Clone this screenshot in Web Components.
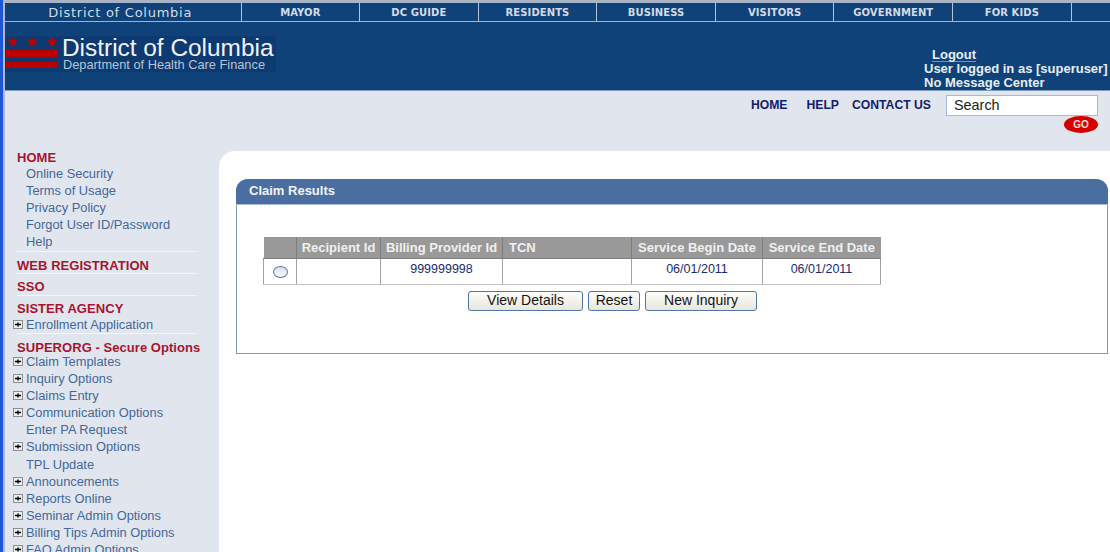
<!DOCTYPE html>
<html>
<head>
<meta charset="utf-8">
<title>Claim Results</title>
<style>
html, body { margin: 0; height: 552px; overflow: hidden; background: #e1e6ee; }
body { font-family: "Liberation Sans", Arial, sans-serif; }
</style>
</head>
<body>
<dc-page>
  <dc-topnav slot="top"></dc-topnav>
  <dc-banner slot="top"></dc-banner>
  <dc-utility slot="top"></dc-utility>
  <dc-sidebar slot="side"></dc-sidebar>
  <claim-results slot="main"></claim-results>
</dc-page>

<script>
class DcPage extends HTMLElement {
  constructor() {
    super();
    this.attachShadow({ mode: "open" });
    this.shadowRoot.innerHTML = `
      <style>
        :host { display: block; height: 552px; overflow: hidden; border-left: 3px solid #1c57d8; box-sizing: border-box; }
        .inner { border-left: 2px solid #b4b8bf; height: 552px; box-sizing: border-box; border-top: 3px solid #a9b3c6; }
        .body { display: flex; align-items: stretch; height: 401px; }
        .side { width: 214px; flex: none; }
        .main { flex: 1; background: #fff; border-top-left-radius: 16px; padding: 28px 2px 0 17px; min-width: 0; }
      </style>
      <div class="inner">
        <slot name="top"></slot>
        <div class="body">
          <div class="side"><slot name="side"></slot></div>
          <div class="main"><slot name="main"></slot></div>
        </div>
      </div>
    `;
  }
}

class DcTopnav extends HTMLElement {
  constructor() {
    super();
    this.attachShadow({ mode: "open" });
    const items = ["MAYOR", "DC GUIDE", "RESIDENTS", "BUSINESS", "VISITORS", "GOVERNMENT", "FOR KIDS"];
    this.shadowRoot.innerHTML = `
      <style>
        :host { display: flex; height: 18px; background: #0f4279; border-bottom: 1px solid #9fb3cf; color: #d5dbe5; }
        .cell { display: flex; align-items: center; justify-content: center; border-right: 1px solid #b4c3d8; box-sizing: border-box; width: 118.6px; font: bold 10px "DejaVu Sans", sans-serif; letter-spacing: 0.1px; }
        .first { width: 236.5px; padding-right: 5px; font: 13px "DejaVu Sans", sans-serif; letter-spacing: 0.75px; }
        .rest { flex: 1; }
      </style>
      <div class="cell first">District of Columbia</div>
      ${items.map((item) => `<div class="cell">${item}</div>`).join("")}
      <div class="rest"></div>
    `;
  }
}

class DcBanner extends HTMLElement {
  constructor() {
    super();
    this.attachShadow({ mode: "open" });
    const star = (x) => `<polygon transform="translate(${x} 6)" points="0,-5.5 1.5,-1.8 5.5,-1.8 2.3,0.8 3.5,4.8 0,2.4 -3.5,4.8 -2.3,0.8 -5.5,-1.8 -1.5,-1.8" fill="#c00000"/>`;
    this.shadowRoot.innerHTML = `
      <style>
        :host { display: flex; justify-content: space-between; height: 68px; background: #0f4279; border-bottom: 1px solid #7f9bc0; }
        .logo { display: flex; align-items: flex-start; gap: 4px; align-self: flex-start; margin-top: 14px; height: 36px; width: 271px; background: #0d3a71; box-sizing: border-box; padding-left: 1px; }
        .logo svg { flex: none; }
        .words { display: flex; flex-direction: column; white-space: nowrap; }
        .name { font-size: 24.4px; line-height: 23px; color: #f2f4f8; }
        .dept { font-size: 12.8px; line-height: 11px; color: #b9c4d4; margin-left: 1px; }
        .user { margin: 26px 0 0 0; width: 186px; color: #e9edf3; font-size: 13px; font-weight: bold; line-height: 14px; white-space: nowrap; }
        .logout { display: inline-block; margin-left: 8px; border-bottom: 1px solid #4f9be0; line-height: 13px; }
      </style>
      <div class="logo">
        <svg width="52" height="34" viewBox="0 0 52 34">${star(7)}${star(26)}${star(46)}
          <rect x="0" y="14" width="52" height="7" fill="#bb0000"/>
          <rect x="0" y="26" width="52" height="6" fill="#bb0000"/>
        </svg>
        <div class="words">
          <span class="name">District of Columbia</span>
          <span class="dept">Department of Health Care Finance</span>
        </div>
      </div>
      <div class="user">
        <span class="logout">Logout</span><br>
        User logged in as [superuser]<br>
        No Message Center
      </div>
    `;
  }
}

class DcUtility extends HTMLElement {
  constructor() {
    super();
    this.attachShadow({ mode: "open" });
    this.shadowRoot.innerHTML = `
      <style>
        :host { display: flex; justify-content: flex-end; height: 60px; box-sizing: border-box; padding: 4px 12px 0 0; background: #e1e6ee; }
        .links { display: flex; gap: 19px; margin: 0 15px 0 0; height: 20px; align-items: center; font-size: 12.2px; font-weight: bold; color: #10206e; white-space: nowrap; }
        .links span:last-child { margin-left: -6px; }
        .search { width: 152px; }
        .box { height: 21px; box-sizing: border-box; border: 1px solid #a4bbd6; background: #fff; padding-left: 7px; font-size: 14.4px; line-height: 18px; color: #1a1a1a; }
        .go { width: 34px; height: 17px; margin: 0 0 0 auto; border-radius: 50%; background: #d40000; color: #f4dede; font-size: 10px; font-weight: bold; line-height: 17px; text-align: center; }
      </style>
      <div class="links"><span>HOME</span><span>HELP</span><span>CONTACT US</span></div>
      <div class="search">
        <div class="box">Search</div>
        <div class="go">GO</div>
      </div>
    `;
  }
}

class DcSidebar extends HTMLElement {
  constructor() {
    super();
    this.attachShadow({ mode: "open" });
    const plus = `<svg class="plus" width="10" height="9" viewBox="0 0 10 9"><rect x="0.5" y="0.5" width="9" height="8" fill="#eceef0" stroke="#8b8f96"/><path d="M2 4.5h6M5 2.5v4" stroke="#000" stroke-width="1.4"/></svg>`;
    const link = (text, expand) => `<div class="link">${expand ? plus : ""}<span>${text}</span></div>`;
    this.shadowRoot.innerHTML = `
      <style>
        :host { display: block; }
        .group { margin-left: 12px; width: 180px; border-bottom: 1px solid #f4f6f9; box-sizing: content-box; }
        .head { box-sizing: border-box; color: #a8142f; font-size: 13px; font-weight: bold; line-height: 14px; white-space: nowrap; letter-spacing: 0.05px; }
        .link { position: relative; height: 17.1px; line-height: 17.1px; padding-left: 9px; color: #44669a; font-size: 12.85px; white-space: nowrap; }
        .plus { position: absolute; left: -4px; top: 4px; }
        .home { height: 100px; }
        .home .head { height: 14px; }
        .reg { height: 21px; }
        .reg .head { padding-top: 7px; }
        .sso { height: 21px; }
        .sso .head { padding-top: 6px; }
        .agency { height: 37px; }
        .agency .head { padding-top: 6px; height: 19.5px; }
        .open { border-bottom: 0; }
        .open .head { padding-top: 7px; height: 19px; }
      </style>
      <div class="group home">
        <div class="head">HOME</div>
        ${["Online Security", "Terms of Usage", "Privacy Policy", "Forgot User ID/Password", "Help"].map((t) => link(t)).join("")}
      </div>
      <div class="group reg"><div class="head">WEB REGISTRATION</div></div>
      <div class="group sso"><div class="head">SSO</div></div>
      <div class="group agency"><div class="head">SISTER AGENCY</div>${link("Enrollment Application", true)}</div>
      <div class="group open">
        <div class="head">SUPERORG - Secure Options</div>
        ${[
          ["Claim Templates", true], ["Inquiry Options", true], ["Claims Entry", true],
          ["Communication Options", true], ["Enter PA Request", false], ["Submission Options", true],
          ["TPL Update", false], ["Announcements", true], ["Reports Online", true],
          ["Seminar Admin Options", true], ["Billing Tips Admin Options", true], ["FAQ Admin Options", true],
        ].map(([t, e]) => link(t, e)).join("")}
      </div>
    `;
  }
}

class ClaimResults extends HTMLElement {
  constructor() {
    super();
    this.attachShadow({ mode: "open" });
    this.shadowRoot.innerHTML = `
      <style>
        :host { display: block; }
        .panel { height: 175px; box-sizing: border-box; border: 1px solid #7f9bc0; border-top: 0; border-top-right-radius: 12px; border-top-left-radius: 12px; }
        .title { height: 25px; margin: 0 -1px; padding-left: 13px; background: #4a6e9f; border-bottom: 1px solid #a9bbd3; border-radius: 12px 12px 0 0; color: #f1f4f8; font-size: 13px; font-weight: bold; line-height: 24px; }
        table { border-collapse: collapse; margin: 32px 0 0 26px; table-layout: fixed; width: 617px; font-size: 12.5px; }
        th { height: 21px; padding: 0; background: #999; color: #f0f0f0; font-size: 13px; font-weight: bold; border-right: 1px solid #7d7d7d; border-bottom: 1px solid #808080; text-align: center; white-space: nowrap; }
        td { height: 26px; padding: 0 0 6px; box-sizing: border-box; text-align: center; color: #1b2a72; border: 1px solid #a3a3a3; border-top: 0; border-bottom-color: #c4c4c4; }
        th:last-child { border-right: 0; }
        th.tcn { text-align: left; padding-left: 6px; }
        td.pick { padding: 7px 0 0; vertical-align: top; }
        .radio { display: block; margin: 0 auto; width: 13px; height: 10px; border: 1px solid #4e7aa8; border-radius: 50%; background: linear-gradient(#d8dde4, #fff); }
        .actions { display: flex; gap: 5px; margin: 6px 0 0 231px; }
      </style>
      <div class="panel">
        <div class="title">Claim Results</div>
        <table>
          <colgroup><col style="width:33px"><col style="width:84px"><col style="width:122px"><col style="width:129px"><col style="width:131px"><col style="width:118px"></colgroup>
          <tr><th></th><th>Recipient Id</th><th>Billing Provider Id</th><th class="tcn">TCN</th><th>Service Begin Date</th><th>Service End Date</th></tr>
          <tr><td class="pick"><span class="radio"></span></td><td></td><td>999999998</td><td></td><td>06/01/2011</td><td>06/01/2011</td></tr>
        </table>
        <div class="actions">
          <claim-button style="width:115px">View Details</claim-button>
          <claim-button style="width:52px">Reset</claim-button>
          <claim-button style="width:112px">New Inquiry</claim-button>
        </div>
      </div>
    `;
  }
}

class ClaimButton extends HTMLElement {
  constructor() {
    super();
    this.attachShadow({ mode: "open" });
    this.shadowRoot.innerHTML = `
      <style>
        :host { display: block; height: 20px; box-sizing: border-box; border: 1px solid #4f779f; border-radius: 3px; background: linear-gradient(#fdfdfb, #e8e6dc); color: #141414; font-size: 14px; line-height: 17px; text-align: center; }
      </style>
      <slot></slot>
    `;
  }
}

customElements.define("dc-page", DcPage);
customElements.define("dc-topnav", DcTopnav);
customElements.define("dc-banner", DcBanner);
customElements.define("dc-utility", DcUtility);
customElements.define("dc-sidebar", DcSidebar);
customElements.define("claim-results", ClaimResults);
customElements.define("claim-button", ClaimButton);
</script>
</body>
</html>
